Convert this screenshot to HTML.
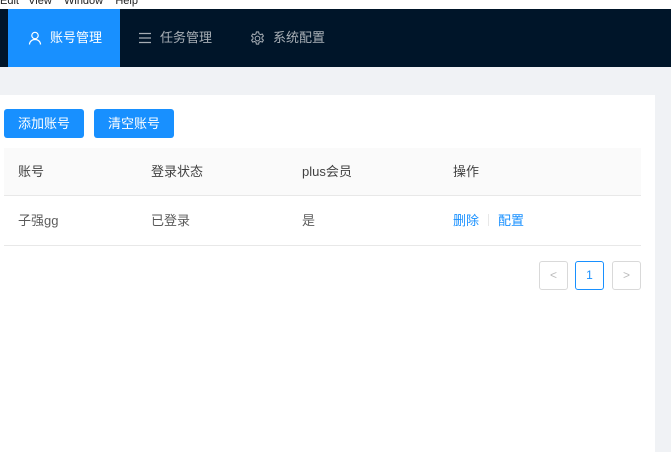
<!DOCTYPE html>
<html><head><meta charset="utf-8"><style>
*{box-sizing:border-box;margin:0;padding:0}
body{width:671px;height:452px;overflow:hidden;background:#f0f2f5;font-family:"Liberation Sans","Noto Sans CJK SC",sans-serif;position:relative;font-size:13px;color:rgba(0,0,0,.65)}
.abs{position:absolute}
.menu{left:0;top:0;width:671px;height:9px;background:#fff;overflow:hidden;font-size:11px;color:#222;line-height:2px;white-space:nowrap}
.nav{left:0;top:9px;width:671px;height:58px;background:#001529}
.tab{top:0;height:58px;line-height:58px;color:rgba(255,255,255,.65);font-size:13px;display:flex;align-items:center;gap:8px}
.content{left:0;top:95px;width:655px;height:357px;background:#fff}
.btn{top:14px;height:29px;width:80px;background:#1890ff;color:#fff;border-radius:3px;text-align:center;line-height:29px;font-size:13px}
.th{left:4px;top:53px;width:637px;height:48px;background:#fafafa;border-bottom:1px solid #e8e8e8}
.tr{left:4px;top:102px;width:637px;height:49px;border-bottom:1px solid #e8e8e8}
.cell{line-height:48px;top:0}
.pg{top:166px;width:29px;height:29px;border:1px solid #d9d9d9;border-radius:3px;text-align:center;line-height:27px;color:#bbb;font-size:12px}
a{color:#1890ff;text-decoration:none}
</style></head><body>
<div class="abs menu">Edit&nbsp;&nbsp;&nbsp;View&nbsp;&nbsp;&nbsp;&nbsp;Window&nbsp;&nbsp;&nbsp;&nbsp;Help</div>
<div class="abs nav">
 <div class="abs tab" style="left:8px;width:112px;background:#1890ff;color:#fff;padding-left:20px">
  <svg width="14" height="14" viewBox="0 0 14 14" fill="none" stroke="#fff" stroke-width="1.2"><circle cx="7" cy="4.5" r="3.2"/><path d="M1.5 13.5c0-3 2.5-5 5.5-5s5.5 2 5.5 5"/></svg>账号管理</div>
 <div class="abs tab" style="left:138px">
  <svg width="14" height="14" viewBox="0 0 14 14" stroke="rgba(255,255,255,.65)" stroke-width="1.2"><path d="M1 2.5h12M1 7h12M1 11.5h12"/></svg>任务管理</div>
 <div class="abs tab" style="left:250px">
  <svg width="15" height="15" viewBox="0 0 16 16" fill="none" stroke="rgba(255,255,255,.65)" stroke-width="1.1"><circle cx="8" cy="8" r="2.5"/><path d="M6.8 1h2.4l.4 2 1.6.9 1.9-.7 1.2 2.1-1.5 1.3v1.8l1.5 1.3-1.2 2.1-1.9-.7-1.6.9-.4 2H6.8l-.4-2-1.6-.9-1.9.7-1.2-2.1 1.5-1.3V6.6L1.7 5.3l1.2-2.1 1.9.7 1.6-.9z"/></svg>系统配置</div>
</div>
<div class="abs content">
 <div class="abs btn" style="left:4px">添加账号</div>
 <div class="abs btn" style="left:94px">清空账号</div>
 <div class="abs th">
  <div class="abs cell" style="left:14px;color:rgba(0,0,0,.75)">账号</div>
  <div class="abs cell" style="left:147px;color:rgba(0,0,0,.75)">登录状态</div>
  <div class="abs cell" style="left:298px;color:rgba(0,0,0,.75)">plus会员</div>
  <div class="abs cell" style="left:449px;color:rgba(0,0,0,.75)">操作</div>
 </div>
 <div class="abs tr">
  <div class="abs cell" style="left:14px">子强gg</div>
  <div class="abs cell" style="left:147px">已登录</div>
  <div class="abs cell" style="left:298px">是</div>
  <div class="abs cell" style="left:449px"><a>删除</a><span style="display:inline-block;width:1px;height:12px;background:#e8e8e8;margin:0 9px;vertical-align:-1px"></span><a>配置</a></div>
 </div>
 <div class="abs pg" style="left:539px">&lt;</div>
 <div class="abs pg" style="left:575px;border-color:#1890ff;color:#1890ff">1</div>
 <div class="abs pg" style="left:612px">&gt;</div>
</div>
</body></html>
